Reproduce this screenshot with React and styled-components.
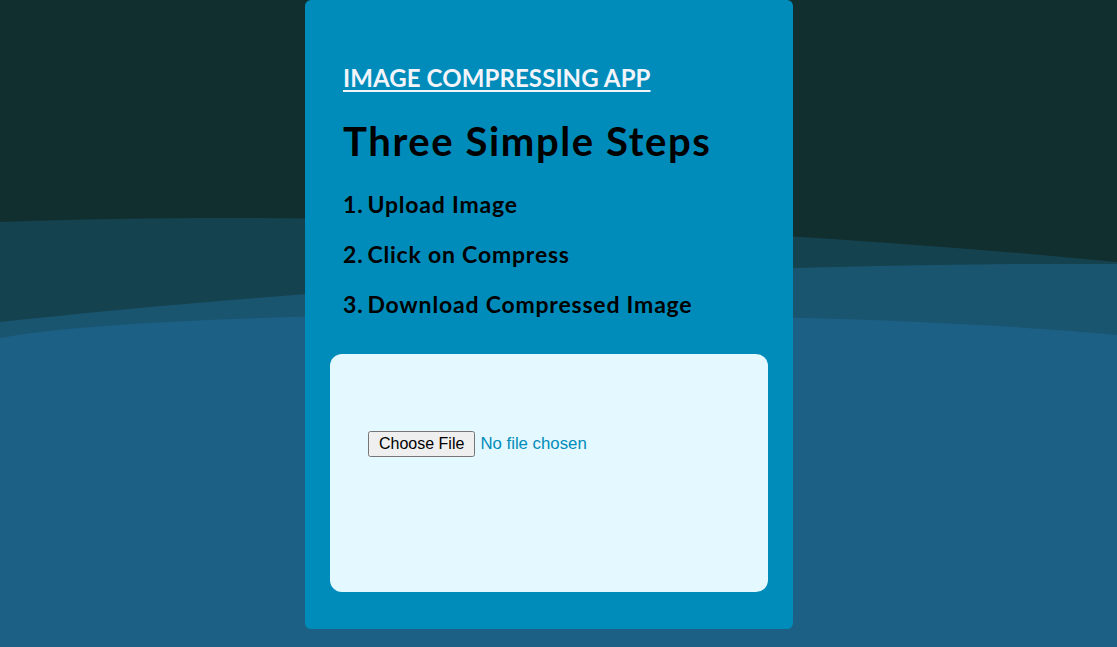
import React from 'react'
import styled, {createGlobalStyle} from 'styled-components'

const GlobalStyle = createGlobalStyle`
  html, body {
    margin: 0;
    padding: 0;
    background: #112f2f;
  }
  body {
    font-family: 'Lato', 'Open Sans', sans-serif;
  }
`

const steps = ['Upload Image', 'Click on Compress', 'Download Compressed Image']

const Waves = () => (
  <WaveSvg viewBox="0 0 1117 647" preserveAspectRatio="none">
    <path d="M0 222 C 300 211, 700 222, 1117 262 L1117 647 L0 647 Z" fill="#15424f" />
    <path d="M0 322 C 300 290, 700 262, 1117 264 L1117 647 L0 647 Z" fill="#1a5570" />
    <path d="M0 338 C 150 308, 800 305, 1117 335 L1117 647 L0 647 Z" fill="#1d6086" />
  </WaveSvg>
)

const App = () => (
  <>
    <GlobalStyle />
    <Waves />
    <Page>
      <Card>
        <Header>
          <AppTitle href="#">IMAGE COMPRESSING APP</AppTitle>
          <Heading>Three Simple Steps</Heading>
          <StepList>
            {steps.map((step, i) => (
              <Step key={step}>
                <StepNum>{i + 1}.</StepNum>
                {step}
              </Step>
            ))}
          </StepList>
        </Header>
        <UploadBox>
          <FileInput type="file" accept="image/*" />
        </UploadBox>
      </Card>
    </Page>
  </>
)

const WaveSvg = styled.svg`
  position: fixed;
  inset: 0;
  width: 100vw;
  height: 100vh;
  z-index: 0;
  display: block;
`

const Page = styled.main`
  position: relative;
  z-index: 1;
  display: flex;
  justify-content: center;
  align-items: flex-start;
  min-height: 100vh;
`

const Card = styled.section`
  width: 488px;
  box-sizing: border-box;
  margin-right: 19px;
  padding: 63px 25px 37px;
  background: #008cba;
  border-radius: 6px;
  display: flex;
  flex-direction: column;
`

const Header = styled.div`
  padding: 0 13px;
  display: flex;
  flex-direction: column;
  align-items: flex-start;
`

const AppTitle = styled.a`
  font-size: 24px;
  line-height: 30px;
  font-weight: 700;
  color: #f2f4fa;
  text-decoration: underline;
  text-decoration-thickness: 2px;
  text-underline-offset: 3px;
  letter-spacing: 0.1px;
`

const Heading = styled.h1`
  margin: 24px 0 0;
  font-size: 40px;
  line-height: 48px;
  font-weight: 700;
  letter-spacing: 1.6px;
  color: #000;
`

const StepList = styled.ol`
  list-style: none;
  margin: 14px 0 0;
  padding: 0;
`

const Step = styled.li`
  font-size: 23px;
  line-height: 50px;
  font-weight: 700;
  letter-spacing: 0.8px;
  color: #000;
`

const StepNum = styled.span`
  margin-right: 4px;
`

const UploadBox = styled.div`
  margin-top: 25px;
  height: 238px;
  box-sizing: border-box;
  padding: 77px 38px;
  background: #e3f8ff;
  border-radius: 12px;
`

const FileInput = styled.input`
  font-family: 'Liberation Sans', Arial, sans-serif;
  font-size: 16.8px;
  color: #008cba;

  &::file-selector-button {
    font-family: inherit;
    font-size: 16px;
    padding: 2px 9px;
    margin-right: 5px;
  }
`

export default App
